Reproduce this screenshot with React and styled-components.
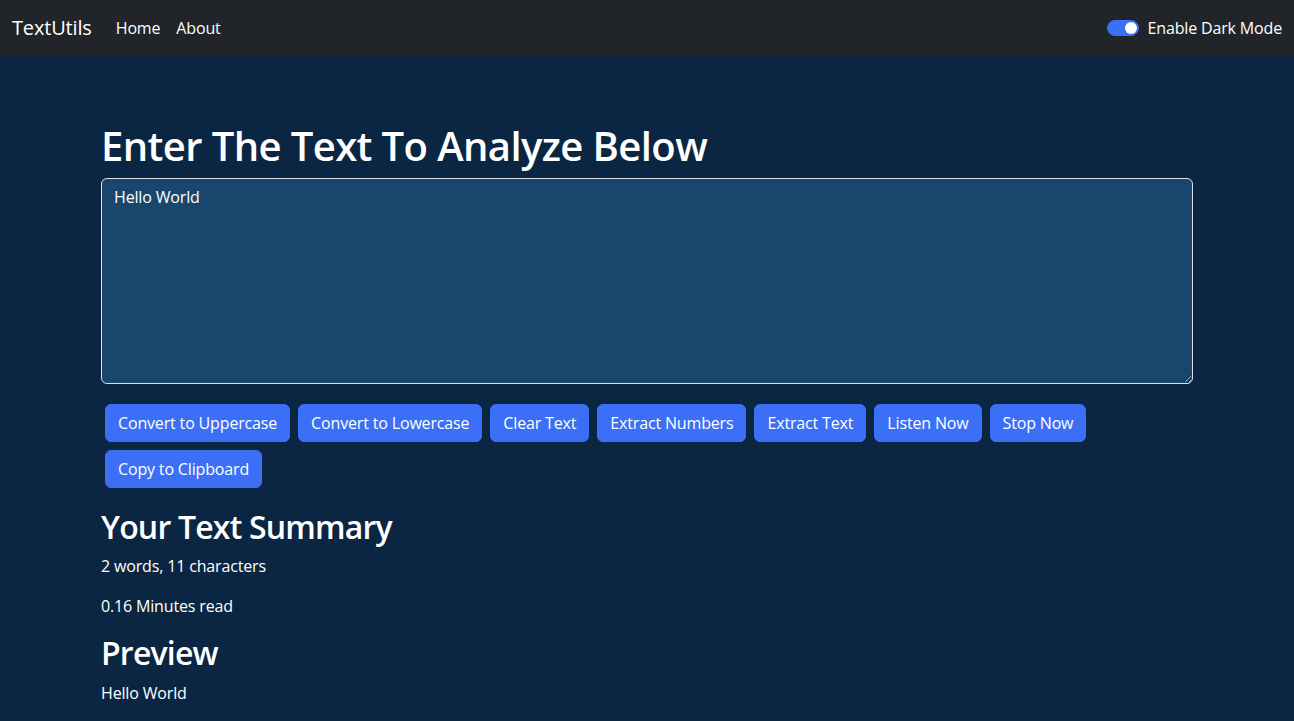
import React, { useState } from 'react'
import styled, { createGlobalStyle } from 'styled-components'

const GlobalStyle = createGlobalStyle`
    * {
        box-sizing: border-box;
    }
    body {
        margin: 0;
        background-color: #0b2642;
        color: #ffffff;
        font-family: 'Open Sans', 'Noto Sans', sans-serif;
        font-size: 16px;
        line-height: 1.5;
        letter-spacing: -0.01em;
    }
`

const Nav = styled.nav`
    height: 56px;
    background-color: #212529;
    display: flex;
    align-items: center;
    justify-content: space-between;
    padding: 0 12px;
`
const NavLeft = styled.div`
    display: flex;
    align-items: center;
`
const Brand = styled.a`
    font-size: 20px;
    line-height: 30px;
    color: #ffffff;
    margin-right: 16px;
    text-decoration: none;
`
const NavLink = styled.a`
    padding: 8px;
    color: #ffffff;
    text-decoration: none;
`
const Switch = styled.label`
    display: flex;
    align-items: center;
    gap: 9px;
    cursor: pointer;
`
const Track = styled.span`
    position: relative;
    width: 32px;
    height: 16px;
    border-radius: 8px;
    background-color: ${(p) => (p.on ? '#3b6ff6' : '#ffffff')};
    border: 1px solid ${(p) => (p.on ? '#3b6ff6' : '#adb5bd')};

    &::after {
        content: '';
        position: absolute;
        top: 1px;
        left: ${(p) => (p.on ? '17px' : '1px')};
        width: 12px;
        height: 12px;
        border-radius: 50%;
        background-color: ${(p) => (p.on ? '#ffffff' : '#adb5bd')};
    }
`

const Page = styled.main`
    max-width: 1116px;
    margin: 66px auto 0;
    padding: 0 12px;
`
const Title = styled.h1`
    font-size: 40px;
    font-weight: 600;
    line-height: 1.2;
    letter-spacing: -0.015em;
    margin: 0 0 8px;
`
const TextBox = styled.textarea`
    display: block;
    width: 100%;
    height: 206px;
    margin-bottom: 16px;
    padding: 6px 12px;
    font: inherit;
    letter-spacing: inherit;
    color: #ffffff;
    background-color: #18466d;
    border: 1px solid #dee2e6;
    border-radius: 6px;
    outline: none;
`
const Buttons = styled.div`
    display: flex;
    flex-wrap: wrap;
`
const Button = styled.button`
    margin: 4px;
    padding: 6px 12px;
    font: inherit;
    letter-spacing: inherit;
    line-height: 1.5;
    color: #ffffff;
    background-color: #3b6ff6;
    border: 1px solid #3b6ff6;
    border-radius: 6px;
    cursor: pointer;
`
const Summary = styled.section`
    margin-top: 16px;
`
const Heading = styled.h2`
    font-size: 32px;
    font-weight: 600;
    line-height: 1.2;
    letter-spacing: -0.025em;
    margin: 0 0 8px;
`
const Text = styled.p`
    margin: 0 0 16px;
`
const PreviewText = styled.p`
    margin: 0;
`

const actions = [
    'Convert to Uppercase',
    'Convert to Lowercase',
    'Clear Text',
    'Extract Numbers',
    'Extract Text',
    'Listen Now',
    'Stop Now',
    'Copy to Clipboard',
]

const App = () => {
    const [text, setText] = useState('Hello World')
    const [dark, setDark] = useState(true)

    const words = text.split(/\s+/).filter((w) => w.length !== 0).length

    return (
        <>
            <GlobalStyle />
            <Nav>
                <NavLeft>
                    <Brand href="#">TextUtils</Brand>
                    <NavLink href="#">Home</NavLink>
                    <NavLink href="#">About</NavLink>
                </NavLeft>
                <Switch onClick={() => setDark(!dark)}>
                    <Track on={dark ? 1 : 0} />
                    Enable Dark Mode
                </Switch>
            </Nav>
            <Page>
                <Title>Enter The Text To Analyze Below</Title>
                <TextBox value={text} onChange={(e) => setText(e.target.value)} />
                <Buttons>
                    {actions.map((a) => (
                        <Button key={a}>{a}</Button>
                    ))}
                </Buttons>
                <Summary>
                    <Heading>Your Text Summary</Heading>
                    <Text>{words} words, {text.length} characters</Text>
                    <Text>{(0.008 * 20).toFixed(2)} Minutes read</Text>
                    <Heading>Preview</Heading>
                    <PreviewText>{text}</PreviewText>
                </Summary>
            </Page>
        </>
    )
}

export default App
